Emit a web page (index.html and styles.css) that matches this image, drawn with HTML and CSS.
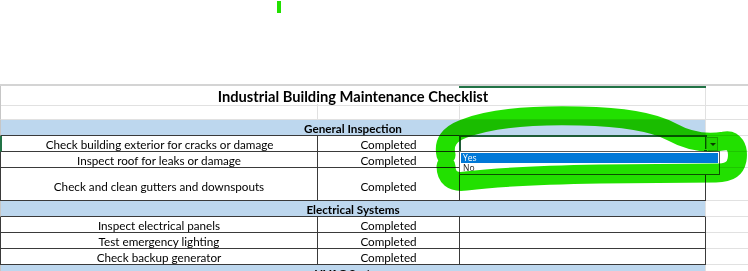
FILE: index.html
```html
<!DOCTYPE html>
<html lang="en">
<head>
    <meta charset="UTF-8">
    <meta name="viewport" content="width=device-width, initial-scale=1.0">
    <title>Industrial Building Maintenance Checklist</title>
    <link rel="stylesheet" href="styles.css">
</head>
<body>
    <div class="sheet">
        <div class="row title-row">
            <div class="cell title">Industrial Building Maintenance Checklist</div>
            <div class="cell spare"></div>
        </div>
        <div class="row">
            <div class="cell first"></div>
            <div class="cell"></div>
            <div class="cell"></div>
            <div class="cell spare"></div>
        </div>

        <div class="row section">
            <div class="cell heading">General Inspection</div>
            <div class="cell spare"></div>
        </div>
        <div class="row task current">
            <div class="cell first">Check building exterior for cracks or damage</div>
            <div class="cell">Completed</div>
            <div class="cell active">
                <span class="drop-btn"></span>
                <span class="fill-handle"></span>
                <div class="drop-list">
                    <div class="option picked">Yes</div>
                    <div class="option">No</div>
                </div>
            </div>
            <div class="cell spare"></div>
        </div>
        <div class="row task">
            <div class="cell first">Inspect roof for leaks or damage</div>
            <div class="cell">Completed</div>
            <div class="cell"></div>
            <div class="cell spare"></div>
        </div>
        <div class="row task tall">
            <div class="cell first">Check and clean gutters and downspouts</div>
            <div class="cell">Completed</div>
            <div class="cell"></div>
            <div class="cell spare"></div>
        </div>

        <div class="row section">
            <div class="cell heading">Electrical Systems</div>
            <div class="cell spare"></div>
        </div>
        <div class="row task">
            <div class="cell first">Inspect electrical panels</div>
            <div class="cell">Completed</div>
            <div class="cell"></div>
            <div class="cell spare"></div>
        </div>
        <div class="row task">
            <div class="cell first">Test emergency lighting</div>
            <div class="cell">Completed</div>
            <div class="cell"></div>
            <div class="cell spare"></div>
        </div>
        <div class="row task">
            <div class="cell first">Check backup generator</div>
            <div class="cell">Completed</div>
            <div class="cell"></div>
            <div class="cell spare"></div>
        </div>

        <div class="row section">
            <div class="cell heading">HVAC Systems</div>
            <div class="cell spare"></div>
        </div>
    </div>

    <!-- highlighter scribble drawn over the screenshot -->
    <svg class="marker" width="748" height="271" viewBox="0 0 748 271">
        <rect x="277" y="1" width="4" height="12" fill="#22e000"/>
        <path d="M446 155 C443 142 450 134 463 129 C493 117 540 115 580 116 C622 117 652 121 672 132 C690 142 706 144 724 141 C734 139 739 148 737 160 C735 170 728 173 716 173 L600 174 C540 175 490 178 466 181 C452 183 446 177 446 166"
              fill="none" stroke="#22e000" stroke-width="19" stroke-linecap="round" stroke-linejoin="round"/>
    </svg>
</body>
</html>
```

FILE: styles.css
```css
* {
    margin: 0;
    padding: 0;
    box-sizing: border-box;
}

body {
    width: 748px;
    height: 271px;
    overflow: hidden;
    background: white;
    font-family: Lato, "Liberation Sans", sans-serif;
    font-size: 11.7px;
    color: #000;
    position: relative;
}

.sheet {
    margin-top: 84px;
    border-top: 2px solid #d4d4d4;
    position: relative;
}

/* selected column marker on the header edge */
.sheet::before {
    content: "";
    position: absolute;
    left: 459px;
    top: 0;
    width: 247px;
    height: 2px;
    background: #217346;
}

.row {
    display: grid;
    grid-template-columns: 318px 142px 246px 1fr;
    height: 16px;
}

.title-row {
    height: 18px;
}

.tall {
    height: 33px;
}

.cell {
    display: flex;
    align-items: center;
    justify-content: center;
    white-space: nowrap;
    border-right: 1px solid #e1e1e1;
    border-bottom: 1px solid #e1e1e1;
}

.first {
    border-left: 1px solid #c6c6c6;
}

.title {
    grid-column: 1 / 4;
    border-left: 1px solid #c6c6c6;
    font-weight: bold;
    font-size: 14.7px;
    padding-top: 1px;
}

.spare {
    border-right: none;
}

.section .heading {
    grid-column: 1 / 4;
    background: #bdd7ee;
    border-left: 1px solid #c6c6c6;
    border-bottom-color: #3a3a3a;
    font-weight: bold;
}

.task .cell {
    border-color: #3a3a3a;
}

.task .spare {
    border-bottom-color: #e1e1e1;
}

.task .first {
    border-left-color: #3a3a3a;
}

.task.current .first {
    border-left: 2px solid #217346;
}

.tall .cell {
    padding-top: 3px;
}

/* data validation dropdown on the active cell */
.active {
    position: relative;
    outline: 2px solid #1e5c37;
    outline-offset: -1px;
}

.drop-btn {
    position: absolute;
    left: 246px;
    top: 1px;
    width: 12px;
    height: 14px;
    background: #f3f3f3;
    border: 1px solid #b8b8b8;
}

.drop-btn::after {
    content: "";
    position: absolute;
    left: 3px;
    top: 5px;
    border-left: 3px solid transparent;
    border-right: 3px solid transparent;
    border-top: 3px solid #444;
}

.fill-handle {
    position: absolute;
    right: -3px;
    bottom: -3px;
    width: 5px;
    height: 5px;
    background: #1e5c37;
    border: 1px solid white;
}

.drop-list {
    position: absolute;
    left: -1px;
    top: 15px;
    width: 261px;
    height: 24px;
    background: white;
    border: 1px solid #5a5a5a;
    padding: 1px;
    font-family: "Open Sans", "Liberation Sans", sans-serif;
    font-size: 8.5px;
    z-index: 1;
}

.option {
    height: 10px;
    line-height: 10px;
    padding-left: 2px;
    color: #222;
}

.option.picked {
    background: #0078d7;
    color: white;
}

.marker {
    position: absolute;
    left: 0;
    top: 0;
    mix-blend-mode: multiply;
    pointer-events: none;
    z-index: 2;
}
```
